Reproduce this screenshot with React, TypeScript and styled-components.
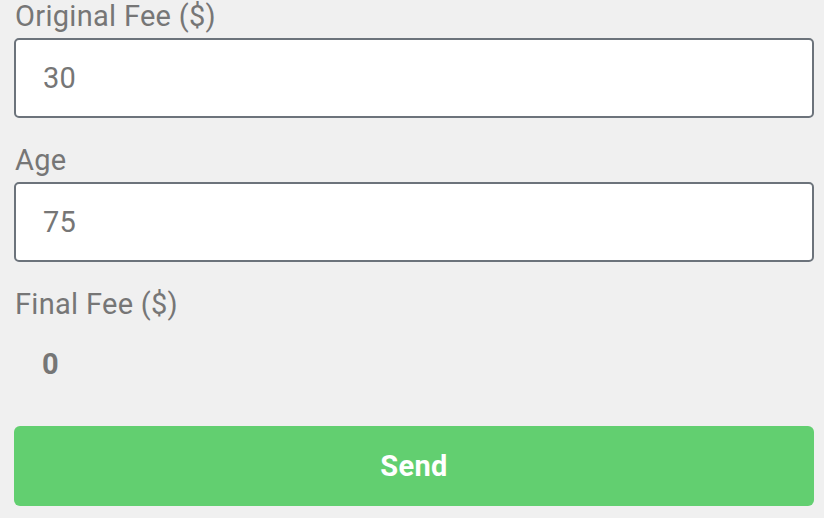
import React from "react";
import styled, { createGlobalStyle } from "styled-components";

const GlobalStyle = createGlobalStyle`
  html, body {
    margin: 0;
    padding: 0;
    background: #f0f0f0;
  }
  body {
    font-family: Roboto, "Liberation Sans", sans-serif;
  }
`;

const Form = styled.form`
  display: flex;
  flex-direction: column;
  padding: 0 10px 0 14px;
  box-sizing: border-box;
  width: 824px;
`;

const Field = styled.div`
  display: flex;
  flex-direction: column;
  gap: 5px;
  margin-bottom: 26px;
`;

const Label = styled.label`
  font-size: 29px;
  line-height: 33px;
  letter-spacing: 0.3px;
  color: #767676;
  padding-left: 1px;
`;

const Input = styled.input`
  box-sizing: border-box;
  width: 800px;
  height: 80px;
  border: 2px solid #6c737b;
  border-radius: 5px;
  background: #ffffff;
  padding: 0 27px;
  font-family: Roboto, "Liberation Sans", sans-serif;
  font-size: 29px;
  letter-spacing: 0.3px;
  color: #767676;
  outline: none;
`;

const Output = styled.output`
  display: block;
  font-size: 29px;
  line-height: 33px;
  letter-spacing: 0.3px;
  font-weight: 700;
  color: #767676;
  padding: 27px 28px 0;
  margin-bottom: 45px;
`;

const Button = styled.button`
  width: 800px;
  height: 80px;
  border: none;
  border-radius: 6px;
  background: #62cf70;
  color: #ffffff;
  font-family: Roboto, "Liberation Sans", sans-serif;
  font-size: 29px;
  letter-spacing: 0.3px;
  font-weight: 700;
  cursor: pointer;
`;

export default function App() {
  return (
    <>
      <GlobalStyle />
      <Form onSubmit={(e) => e.preventDefault()}>
        <Field>
          <Label htmlFor="fee">Original Fee ($)</Label>
          <Input id="fee" defaultValue="30" />
        </Field>
        <Field>
          <Label htmlFor="age">Age</Label>
          <Input id="age" defaultValue="75" />
        </Field>
        <Label>Final Fee ($)</Label>
        <Output>0</Output>
        <Button type="submit">Send</Button>
      </Form>
    </>
  );
}
